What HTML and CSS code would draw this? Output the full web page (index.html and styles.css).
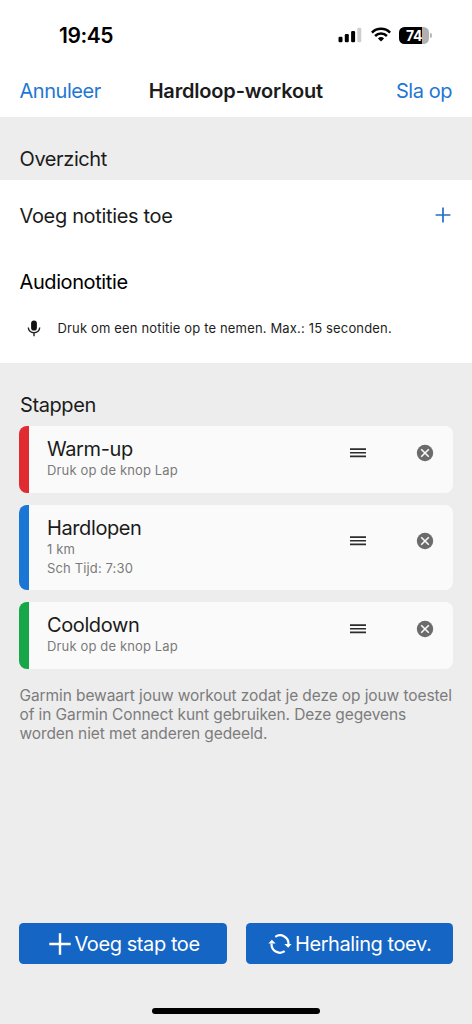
FILE: index.html
```html
<!DOCTYPE html>
<html lang="nl">
<head>
<meta charset="utf-8">
<title>Hardloop-workout</title>
<link rel="stylesheet" href="styles.css">
</head>
<body>
<svg class="defs" aria-hidden="true">
  <symbol id="drag" viewBox="0 0 18 12"><path d="M1 2.1h16M1 5.8h16M1 9.4h16" stroke="#2c2c2c" stroke-width="1.6"/></symbol>
  <symbol id="remove" viewBox="0 0 18 18"><circle cx="9" cy="9" r="8.2" fill="#6b6b6b"/><path d="M5.2 5.2l7.6 7.6M12.8 5.2l-7.6 7.6" stroke="#fafafa" stroke-width="1.6"/></symbol>
</svg>
<div class="screen">
  <div class="status">
    <span class="time">19:45</span>
    <div class="indicators">
      <svg class="signal" width="24" height="16" viewBox="0 0 24 16"><rect x="0.5" y="9.7" width="4" height="5.6" rx="1.2"/><rect x="6.8" y="7" width="4" height="8.3" rx="1.2"/><rect x="13.1" y="4" width="4" height="11.3" rx="1.2"/><rect x="19.3" y="0.7" width="4" height="14.6" rx="1.2" fill="#cfcfcf"/></svg>
      <svg class="wifi" width="20" height="15" viewBox="0 0 20 15"><g fill="none" stroke="#000" stroke-width="2.5"><path d="M0.9 5.6a12.9 12.9 0 0 1 18.2 0"/><path d="M4.1 9a8.4 8.4 0 0 1 11.8 0"/></g><path d="M10 14.4L6.9 11.5a4.5 4.5 0 0 1 6.2 0z"/></svg>
      <span class="battery">74</span><i class="nub"></i>
    </div>
  </div>
  <header class="nav">
    <a class="cancel">Annuleer</a>
    <h1>Hardloop-workout</h1>
    <a class="save">Sla op</a>
  </header>
  <h2 class="section">Overzicht</h2>
  <section class="notes">
    <div class="note-row"><span>Voeg notities toe</span><svg width="16" height="16" viewBox="0 0 16 16"><path d="M8 0.6v14.8M0.6 8h14.8" stroke="#1f70cc" stroke-width="1.7"/></svg></div>
    <h3>Audionotitie</h3>
    <div class="audio-row"><svg width="14" height="17" viewBox="0 0 14 17"><rect x="4.1" y="0.6" width="5.8" height="10" rx="2.9" fill="#111"/><path d="M1.3 7.6a5.7 5.2 0 0 0 11.4 0M7 13v3.3" fill="none" stroke="#222" stroke-width="1.4"/></svg><span>Druk om een notitie op te nemen. Max.: 15 seconden.</span></div>
  </section>
  <main class="steps">
    <h2>Stappen</h2>
    <article class="card red">
      <div class="info"><h3>Warm-up</h3><p>Druk op de knop Lap</p></div>
      <svg class="drag"><use href="#drag"/></svg><svg class="remove"><use href="#remove"/></svg>
    </article>
    <article class="card blue">
      <div class="info"><h3>Hardlopen</h3><p>1 km</p><p>Sch Tijd: 7:30</p></div>
      <svg class="drag"><use href="#drag"/></svg><svg class="remove"><use href="#remove"/></svg>
    </article>
    <article class="card green">
      <div class="info"><h3>Cooldown</h3><p>Druk op de knop Lap</p></div>
      <svg class="drag"><use href="#drag"/></svg><svg class="remove"><use href="#remove"/></svg>
    </article>
    <p class="privacy">Garmin bewaart jouw workout zodat je deze op jouw toestel<br>of in Garmin Connect kunt gebruiken. Deze gegevens<br>worden niet met anderen gedeeld.</p>
  </main>
  <footer>
    <div class="buttons">
      <button class="add"><svg width="22" height="22" viewBox="0 0 22 22"><path d="M11 0.3v21.4M0.3 11h21.4" stroke="#fff" stroke-width="2.4"/></svg><span>Voeg stap toe</span></button>
      <button class="repeat"><svg width="24" height="20" viewBox="0 0 24 20"><g fill="none" stroke="#fff" stroke-width="2.2"><path d="M7.3 2.8A8.4 8.4 0 0 1 20.4 10.5"/><path d="M16.7 17.2A8.4 8.4 0 0 1 3.6 9.5"/></g><path d="M16.3 10.1h7.3l-3.4 3.7zM0.4 9.4h7.3L3.8 5.8z" fill="#fff"/></svg><span>Herhaling toev.</span></button>
    </div>
    <div class="home"></div>
  </footer>
</div>
</body>
</html>
```
FILE: styles.css
```css
* { box-sizing: border-box; margin: 0; padding: 0; }
body { background: #ededed; font-family: Inter, "Liberation Sans", sans-serif; color: #1b1b1b; }
.defs { display: none; }
.screen { width: 472px; height: 1024px; display: flex; flex-direction: column; overflow: hidden; }
h1, h2, h3 { font-weight: 400; font-size: 20px; line-height: 24px; letter-spacing: -.4px; white-space: nowrap; }
.status { height: 65px; background: #fff; display: flex; justify-content: space-between; padding: 23px 40px 0 59px; }
.time { font-size: 21px; font-weight: 600; line-height: 25px; color: #000; letter-spacing: -.45px; }
.indicators { display: flex; align-items: flex-start; padding-top: 4px; }
.signal { margin-right: 9px; }
.wifi { margin-right: 8px; }
.battery { width: 30px; height: 17px; border-radius: 5.5px; background: linear-gradient(90deg, #000 76%, #b0b0b0 76%); color: #fff; font-size: 14px; font-weight: 700; line-height: 17px; text-align: center; letter-spacing: -.5px; }
.nub { width: 2px; height: 5px; margin: 6px 0 0 1px; border-radius: 0 3px 3px 0; background: #b5b5b5; }
.nav { height: 52px; background: #fff; display: grid; grid-template-columns: 110px 1fr 110px; padding: 14px 20px 0 19.5px; font-size: 20px; line-height: 24px; letter-spacing: -.45px; }
.nav h1 { font-weight: 600; text-align: center; letter-spacing: -.18px; }
.nav a { color: #2277d3; }
.save { text-align: right; }
.section { height: 63px; padding: 30px 19.5px 0; }
.notes { height: 183px; background: #fff; padding: 24px 19.5px 0; }
.note-row { display: flex; justify-content: space-between; height: 66px; font-size: 20px; line-height: 24px; letter-spacing: -.34px; }
.note-row svg { margin: 3px 1.5px 0 0; }
.notes h3 { color: #000; }
.audio-row { display: flex; align-items: center; gap: 17px; margin-top: 24px; padding-left: 7px; height: 20px; font-size: 13px; line-height: 18px; letter-spacing: .16px; color: #1e1e1e; white-space: nowrap; }
.steps { padding: 30px 19px 0; flex: 1; }
.steps h2 { padding-left: 1px; height: 33px; }
.card { height: 67px; margin-bottom: 12px; display: flex; align-items: flex-start; background: #fafafa; border-radius: 8px; overflow: hidden; border-left: 10px solid; }
.red { border-color: #e02b31; }
.blue { height: 85.4px; border-color: #1976d4; }
.green { border-color: #17a748; }
.info { width: 320px; padding: 11px 0 0 18px; }
.card p { font-size: 13px; line-height: 18.5px; color: #7a7a7a; letter-spacing: .14px; white-space: nowrap; }
.drag { width: 18px; height: 12px; align-self: center; margin-bottom: 13px; }
.remove { width: 18px; height: 18px; align-self: center; margin: 0 0 13px 49px; }
.privacy { padding: 5px 0 0 .5px; font-size: 15.5px; line-height: 19px; letter-spacing: -.1px; color: #7c7c7c; white-space: nowrap; }
footer { height: 101px; }
.buttons { display: grid; grid-template-columns: 1fr 1fr; gap: 19px; padding: 0 19px; }
button { height: 41px; border: 0; border-radius: 4.5px; background: #1565c4; color: #fff; font: 20px/24px Inter, "Liberation Sans", sans-serif; letter-spacing: -.42px; display: flex; align-items: center; white-space: nowrap; }
.add { padding-left: 29.5px; gap: 4px; }
.repeat { padding-left: 22.5px; gap: 3px; }
.home { width: 168px; height: 6px; border-radius: 3px; background: #000; margin: 44px auto 0; }
```
